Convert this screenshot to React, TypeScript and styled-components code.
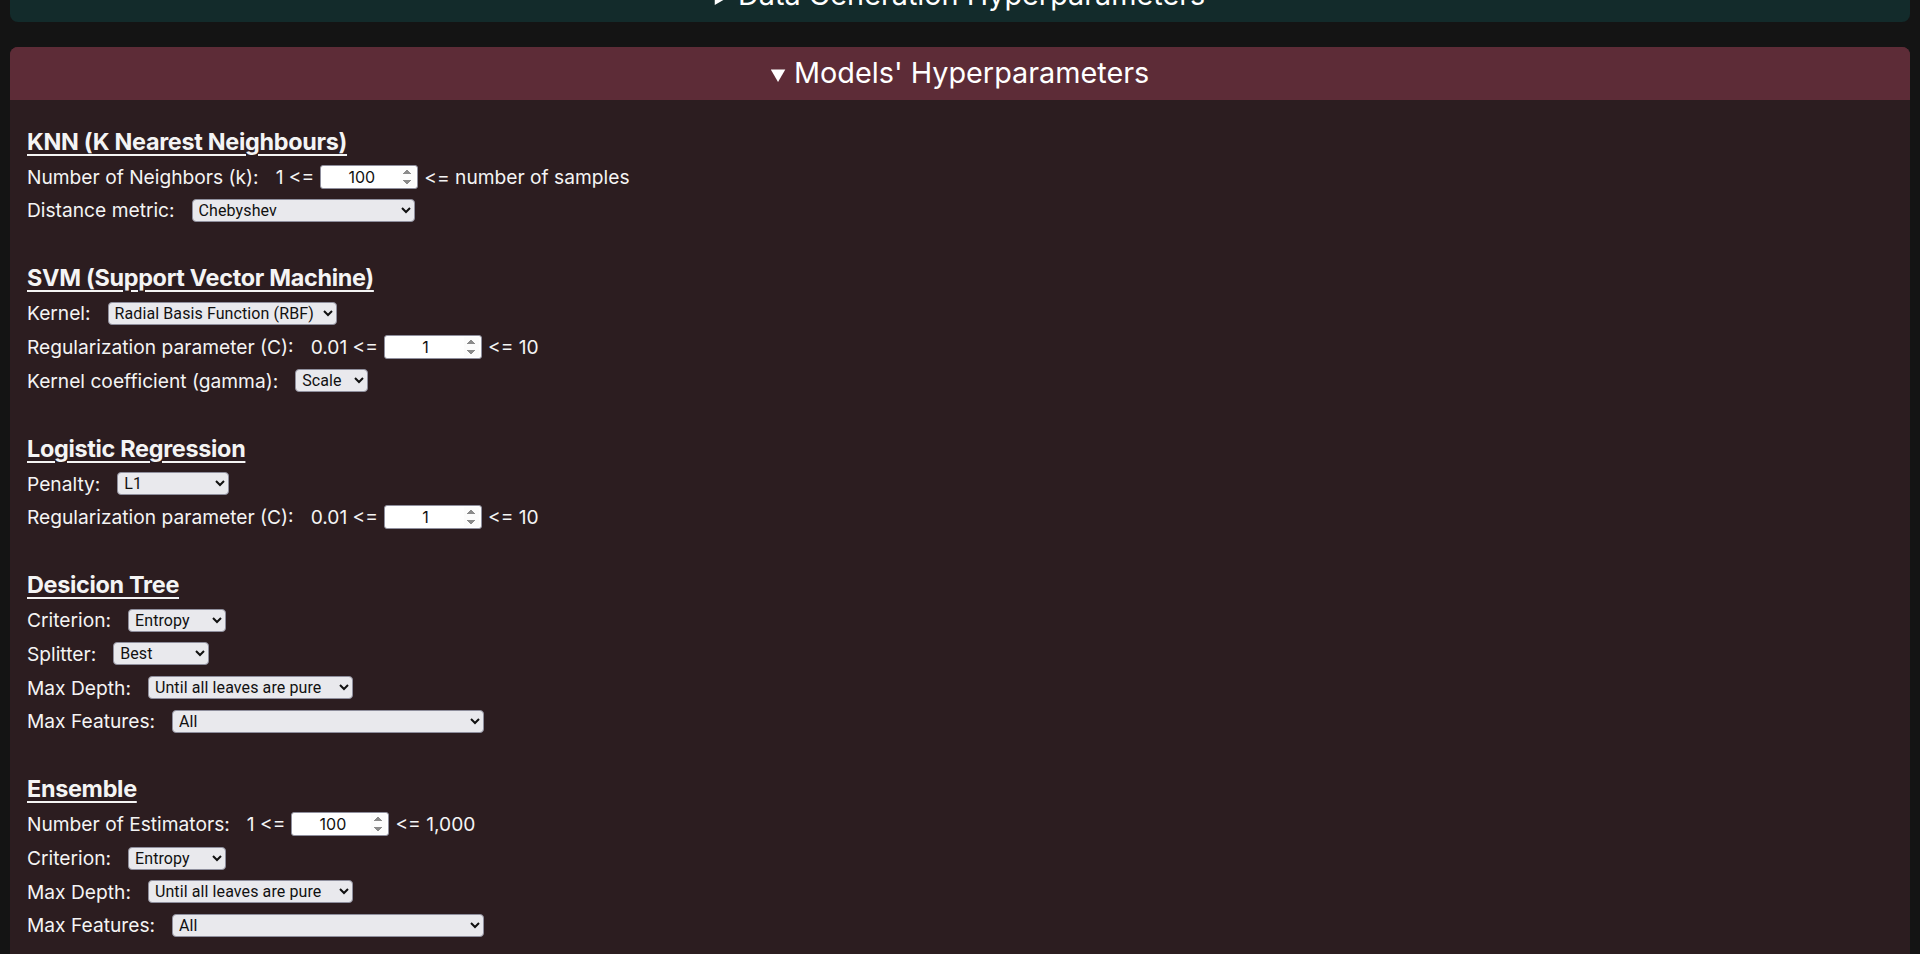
import React, { useLayoutEffect } from 'react';
import styled, { createGlobalStyle } from 'styled-components';

const GlobalStyle = createGlobalStyle`
  html, body {
    margin: 0;
    padding: 0;
    background: #141414;
    color: #f4f4f4;
    font-family: Inter, "Noto Sans", sans-serif;
  }
  html::-webkit-scrollbar {
    width: 10px;
  }
  html::-webkit-scrollbar-track {
    background: #141414;
  }
  html::-webkit-scrollbar-thumb {
    background: #3a3a3a;
    border-left: 6px solid transparent;
    border-right: 1px solid transparent;
    background-clip: padding-box;
  }
`;

const Page = styled.div`
  display: flex;
  flex-direction: column;
  gap: 25px;
  padding: 10px 10px 40px 10px;
`;

const Panel = styled.details<{ $tint: string }>`
  background: ${p => p.$tint};
  border-radius: 8px;
  overflow: hidden;
`;

const PanelSummary = styled.summary<{ $tint: string }>`
  background: ${p => p.$tint};
  text-align: center;
  font-size: 28.8px;
  line-height: 34px;
  padding: 9px 0 8px;
  cursor: pointer;
  color: #ffffff;

  &::marker {
    font-size: 22px;
  }
`;

const PanelBody = styled.div`
  background: #2c1d20;
  padding: 27.5px 17px 40px;
`;

const Section = styled.section`
  margin-bottom: 42px;
`;

const SectionTitle = styled.h3`
  margin: 0 0 9px;
  height: 28px;
  line-height: 28px;
  font-size: 23.4px;
  font-weight: 700;
  letter-spacing: -0.3px;
  text-decoration: underline;
  text-decoration-thickness: 2px;
  text-underline-offset: 4px;
`;

const Row = styled.div`
  display: flex;
  align-items: center;
  height: 24px;
  margin-bottom: 9.7px;
  font-size: 19.2px;
`;

const Label = styled.span`
  margin-right: 17px;
`;

const Bound = styled.span<{ $lead?: boolean }>`
  margin: ${p => (p.$lead ? '0 6px 0 0' : '0 6px')};
`;

const NumberBox = styled.input`
  box-sizing: border-box;
  width: 98px;
  height: 24px;
  border: 1px solid #8f8f9d;
  border-radius: 3px;
  background: #ffffff;
  color: #111;
  font-family: Inter, sans-serif;
  font-size: 16px;
  text-align: center;
  padding: 0 2px;

  &::-webkit-inner-spin-button,
  &::-webkit-outer-spin-button {
    opacity: 1;
  }
`;

const Select = styled.select<{ $w: number }>`
  box-sizing: border-box;
  width: ${p => p.$w}px;
  height: 23px;
  border: 1px solid #8f8f9d;
  border-radius: 4px;
  background-color: #e9e9ed;
  color: #111;
  font-family: Roboto, "Noto Sans", sans-serif;
  font-size: 16px;
  letter-spacing: 0.1px;
  padding: 0 2px;
`;

const Placeholder = styled.div`
  min-height: 560px;
  font-size: 19px;
  color: #bdbdbd;
`;

type Field =
  | { kind: 'num'; label: string; min: string; max: string; value: string }
  | { kind: 'sel'; label: string; value: string; width: number; options?: string[] };

const sections: { title: string; fields: Field[] }[] = [
  {
    title: 'KNN (K Nearest Neighbours)',
    fields: [
      { kind: 'num', label: 'Number of Neighbors (k):', min: '1', max: 'number of samples', value: '100' },
      { kind: 'sel', label: 'Distance metric:', value: 'Chebyshev', width: 223, options: ['Euclidean', 'Manhattan', 'Chebyshev', 'Minkowski (p = 3)'] },
    ],
  },
  {
    title: 'SVM (Support Vector Machine)',
    fields: [
      { kind: 'sel', label: 'Kernel:', value: 'Radial Basis Function (RBF)', width: 229, options: ['Linear', 'Polynomial', 'Radial Basis Function (RBF)', 'Sigmoid'] },
      { kind: 'num', label: 'Regularization parameter (C):', min: '0.01', max: '10', value: '1' },
      { kind: 'sel', label: 'Kernel coefficient (gamma):', value: 'Scale', width: 73, options: ['Scale', 'Auto'] },
    ],
  },
  {
    title: 'Logistic Regression',
    fields: [
      { kind: 'sel', label: 'Penalty:', value: 'L1', width: 112, options: ['None', 'L1', 'L2', 'Elasticnet'] },
      { kind: 'num', label: 'Regularization parameter (C):', min: '0.01', max: '10', value: '1' },
    ],
  },
  {
    title: 'Desicion Tree',
    fields: [
      { kind: 'sel', label: 'Criterion:', value: 'Entropy', width: 98, options: ['Gini', 'Entropy', 'Log Loss'] },
      { kind: 'sel', label: 'Splitter:', value: 'Best', width: 96, options: ['Best', 'Random'] },
      { kind: 'sel', label: 'Max Depth:', value: 'Until all leaves are pure', width: 205 },
      { kind: 'sel', label: 'Max Features:', value: 'All', width: 312, options: ['All', 'Square root of number of features', 'Log2 of number of features'] },
    ],
  },
  {
    title: 'Ensemble',
    fields: [
      { kind: 'num', label: 'Number of Estimators:', min: '1', max: '1,000', value: '100' },
      { kind: 'sel', label: 'Criterion:', value: 'Entropy', width: 98, options: ['Gini', 'Entropy', 'Log Loss'] },
      { kind: 'sel', label: 'Max Depth:', value: 'Until all leaves are pure', width: 205 },
      { kind: 'sel', label: 'Max Features:', value: 'All', width: 312, options: ['All', 'Square root of number of features', 'Log2 of number of features'] },
    ],
  },
  {
    title: 'Neural Network (MLP)',
    fields: [
      { kind: 'num', label: 'Hidden layer size:', min: '1', max: '1,000', value: '100' },
      { kind: 'sel', label: 'Activation:', value: 'ReLU', width: 98, options: ['Identity', 'Logistic', 'Tanh', 'ReLU'] },
      { kind: 'sel', label: 'Solver:', value: 'Adam', width: 98, options: ['LBFGS', 'SGD', 'Adam'] },
      { kind: 'num', label: 'Max iterations:', min: '1', max: '10,000', value: '200' },
    ],
  },
];

function FieldRow({ field }: { field: Field }) {
  if (field.kind === 'num') {
    return (
      <Row>
        <Label>{field.label}</Label>
        <Bound $lead>{field.min} &lt;=</Bound>
        <NumberBox type="number" defaultValue={field.value} />
        <Bound>&lt;= {field.max}</Bound>
      </Row>
    );
  }
  const options = field.options ?? [field.value];
  return (
    <Row>
      <Label>{field.label}</Label>
      <Select $w={field.width} defaultValue={field.value}>
        {options.map(o => <option key={o}>{o}</option>)}
      </Select>
    </Row>
  );
}

export default function App() {
  useLayoutEffect(() => {
    window.scrollTo(0, 41);
  }, []);

  return (
    <>
      <GlobalStyle />
      <Page>
        <Panel $tint="#132b2b">
          <PanelSummary $tint="#132b2b">Data Generation Hyperparameters</PanelSummary>
        </Panel>
        <Panel $tint="#5d2c37" open>
          <PanelSummary $tint="#5d2c37">Models' Hyperparameters</PanelSummary>
          <PanelBody>
            {sections.map(s => (
              <Section key={s.title}>
                <SectionTitle>{s.title}</SectionTitle>
                {s.fields.map(f => <FieldRow key={f.label} field={f} />)}
              </Section>
            ))}
          </PanelBody>
        </Panel>
        <Panel $tint="#1d2433" open>
          <PanelSummary $tint="#1d2433">Results</PanelSummary>
          <PanelBody>
            <Placeholder>Train the models to see their decision boundaries and scores.</Placeholder>
          </PanelBody>
        </Panel>
      </Page>
    </>
  );
}
